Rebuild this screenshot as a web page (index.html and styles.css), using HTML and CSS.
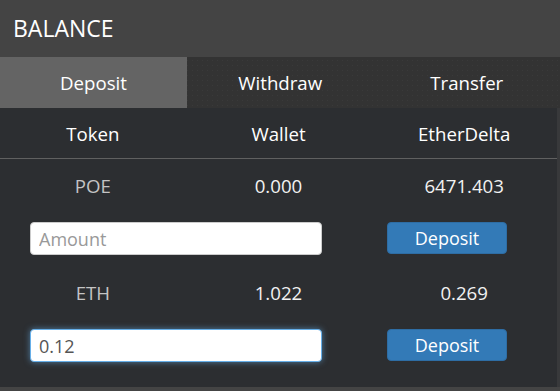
FILE: index.html
```html
<!DOCTYPE html>
<html lang="en">
<head>
  <meta charset="UTF-8">
  <title>Balance</title>
  <link rel="stylesheet" href="styles.css">
</head>
<body>
  <div class="panel">
    <div class="panel-title">BALANCE</div>

    <div class="tabs">
      <div class="tab active">Deposit</div>
      <div class="tab">Withdraw</div>
      <div class="tab">Transfer</div>
    </div>

    <div class="balance-table">
      <div class="row head-row">
        <div>Token</div>
        <div>Wallet</div>
        <div>EtherDelta</div>
      </div>

      <div class="row value-row">
        <div class="token">POE</div>
        <div>0.000</div>
        <div>6471.403</div>
      </div>
      <div class="form-row">
        <input type="text" class="amount" placeholder="Amount">
        <button class="btn-deposit">Deposit</button>
      </div>

      <div class="row value-row eth">
        <div class="token">ETH</div>
        <div>1.022</div>
        <div>0.269</div>
      </div>
      <div class="form-row">
        <input type="text" class="amount focused" value="0.12">
        <button class="btn-deposit">Deposit</button>
      </div>
    </div>

    <div class="panel-bottom"></div>
  </div>
</body>
</html>
```

FILE: styles.css
```css
body {
  margin: 0;
  padding: 0;
  background: #2c2e31;
  font-family: 'Open Sans', 'Liberation Sans', sans-serif;
  color: #fff;
}

.panel {
  width: 560px;
  height: 391px;
  display: flex;
  flex-direction: column;
  background: #2c2e31;
}

.panel-title {
  height: 57px;
  line-height: 56px;
  padding-left: 13px;
  background: #444444;
  font-size: 23px;
  color: #fff;
}

.tabs {
  display: grid;
  grid-template-columns: 187px 1fr 1fr;
  height: 51px;
  background-color: #333333;
  background-image: radial-gradient(rgba(255, 255, 255, 0.035) 0.6px, transparent 1px);
  background-size: 5px 5px;
  background-position: 0 26px;
}

.tab {
  display: flex;
  align-items: center;
  justify-content: center;
  font-size: 18.67px;
  color: #fff;
  padding-bottom: 1px;
}

.tab.active {
  background: #646464;
}

.balance-table {
  flex: 1;
  border-right: 3px solid #38393b;
}

.row {
  display: grid;
  grid-template-columns: 1fr 1fr 1fr;
  align-items: center;
  text-align: center;
  font-size: 18.67px;
}

.head-row {
  box-sizing: border-box;
  height: 51px;
  border-bottom: 1px solid #606060;
}

.value-row {
  height: 53px;
  color: #f2f2f2;
}

.value-row.eth {
  height: 54px;
}

.value-row .token {
  color: #c4c4c4;
}

.form-row {
  display: grid;
  grid-template-columns: 292px 120px;
  column-gap: 65px;
  padding: 10px 30px;
  height: 33px;
}

.amount {
  box-sizing: border-box;
  height: 33px;
  margin: 0;
  padding: 0 8px;
  border: 1px solid #cccccc;
  border-radius: 4px;
  background: #fff;
  font-family: 'Open Sans', 'Liberation Sans', sans-serif;
  font-size: 18px;
  color: #555;
  outline: none;
}

.amount::placeholder {
  color: #999;
}

.amount.focused {
  border-color: #66afe9;
  box-shadow: 0 0 6px rgba(102, 175, 233, 0.6);
}

.btn-deposit {
  box-sizing: border-box;
  height: 32px;
  margin: 0;
  padding: 0;
  background: #337ab7;
  border: 1px solid #2e6da4;
  border-radius: 4px;
  color: #fff;
  font-family: 'Open Sans', 'Liberation Sans', sans-serif;
  font-size: 18px;
  cursor: pointer;
}

.panel-bottom {
  height: 4px;
  background: #444444;
}
```
